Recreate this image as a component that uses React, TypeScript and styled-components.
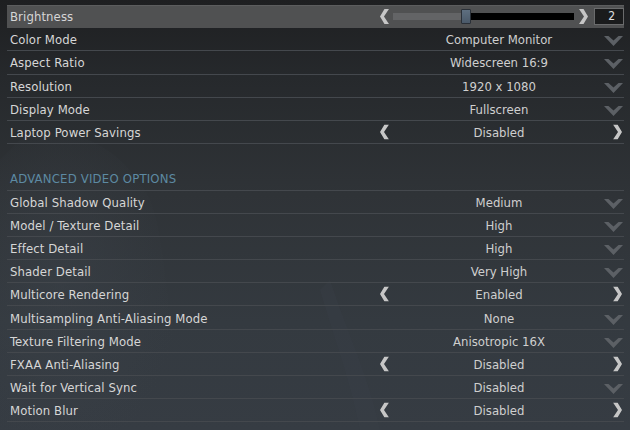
import React from "react";
import styled, { createGlobalStyle } from "styled-components";

const Global = createGlobalStyle`
  html, body { margin: 0; padding: 0; background: #1f2022; }
  body { width: 630px; height: 430px; overflow: hidden; }
`;

const Page = styled.div`
  position: relative;
  width: 630px;
  height: 430px;
  box-sizing: border-box;
  padding: 5px 6px 0 7px;
  overflow: hidden;
  font-family: "DejaVu Sans Condensed", "DejaVu Sans", sans-serif;
  font-size: 13px;
  color: #d2d2d2;
  background: linear-gradient(180deg, #1e1f21 0%, #26292c 18%, #2f3337 45%, #343a40 75%, #363c43 100%);
`;

const Backdrop = styled.svg`
  position: absolute;
  left: 0;
  top: 80px;
  width: 420px;
  height: 350px;
  pointer-events: none;
`;

const List = styled.div`
  position: relative;
  display: flex;
  flex-direction: column;
`;

const Row = styled.div<{ $active?: boolean }>`
  display: grid;
  grid-template-columns: 1fr 249px;
  align-items: center;
  height: 23.2px;
  box-sizing: border-box;
  border-bottom: 1px solid ${(p) => (p.$active ? "transparent" : "#44484d")};
  background: ${(p) => (p.$active ? "#505152" : "transparent")};
  box-shadow: ${(p) => (p.$active ? "inset 0 1px 0 #5c5d5e" : "none")};
`;

const Spacer = styled.div`
  height: 23.2px;
`;

const Label = styled.div<{ $header?: boolean }>`
  padding-left: 3px;
  padding-top: 1px;
  white-space: nowrap;
  color: ${(p) => (p.$header ? "#5d8aa3" : "#d6d6d6")};
  letter-spacing: ${(p) => (p.$header ? "0.2px" : "0.1px")};
`;

const Control = styled.div`
  position: relative;
  display: flex;
  align-items: center;
  justify-content: center;
  height: 100%;
`;

const Value = styled.span`
  color: #cfcfcf;
  white-space: nowrap;
  padding-top: 1px;
  margin-right: 1px;
`;

const ArrowBox = styled.span<{ $side: "left" | "right" }>`
  position: absolute;
  top: 50%;
  ${(p) => (p.$side === "left" ? "left: 4px;" : "right: 1px;")}
  transform: translateY(-50%);
  display: flex;
`;

const ChevronBox = styled.span`
  position: absolute;
  right: 1px;
  top: 50%;
  transform: translateY(-30%);
  display: flex;
`;

const SliderWrap = styled.div`
  display: flex;
  align-items: center;
  width: 100%;
  height: 100%;
  padding-left: 4px;
  box-sizing: border-box;
`;

const Track = styled.div`
  position: relative;
  margin-left: 4px;
  width: 182px;
  height: 7px;
  background: #000;
`;

const TrackFill = styled.div`
  position: absolute;
  left: 0;
  top: 0;
  bottom: 0;
  background: #636466;
`;

const Thumb = styled.div`
  position: absolute;
  top: -4px;
  width: 10px;
  height: 15px;
  box-sizing: border-box;
  background: linear-gradient(180deg, #5e6f80, #4a5969);
  border: 1px solid #2a3038;
  border-radius: 1px;
`;

const RightSpot = styled.span`
  margin-left: 5px;
  display: flex;
`;

const NumBox = styled.div`
  margin-left: 5px;
  width: 30px;
  height: 17px;
  box-sizing: border-box;
  background: #1a1b1c;
  border: 1px solid #6a6b6c;
  color: #e0e0e0;
  font-size: 12px;
  display: flex;
  align-items: center;
  justify-content: flex-end;
  padding-right: 8px;
`;

const Arrow = ({ dir }: { dir: "left" | "right" }) => (
  <svg width="10" height="15" viewBox="0 0 10 15">
    {dir === "left" ? (
      <polygon points="5.5,0 10,0 5,7.5 10,15 5.5,15 1,7.5" fill="#c6c6c6" />
    ) : (
      <polygon points="4.5,0 0,0 5,7.5 0,15 4.5,15 9,7.5" fill="#c6c6c6" />
    )}
  </svg>
);

const Chevron = () => (
  <svg width="19" height="10" viewBox="0 0 19 10">
    <polygon points="0,0 4.5,0 9.5,4.5 14.5,0 19,0 9.5,10" fill="#5c6065" />
  </svg>
);

type Kind = "drop" | "arrows";
type Item = { label: string; value: string; kind: Kind };

const top: Item[] = [
  { label: "Color Mode", value: "Computer Monitor", kind: "drop" },
  { label: "Aspect Ratio", value: "Widescreen 16:9", kind: "drop" },
  { label: "Resolution", value: "1920 x 1080", kind: "drop" },
  { label: "Display Mode", value: "Fullscreen", kind: "drop" },
  { label: "Laptop Power Savings", value: "Disabled", kind: "arrows" },
];

const adv: Item[] = [
  { label: "Global Shadow Quality", value: "Medium", kind: "drop" },
  { label: "Model / Texture Detail", value: "High", kind: "drop" },
  { label: "Effect Detail", value: "High", kind: "drop" },
  { label: "Shader Detail", value: "Very High", kind: "drop" },
  { label: "Multicore Rendering", value: "Enabled", kind: "arrows" },
  { label: "Multisampling Anti-Aliasing Mode", value: "None", kind: "drop" },
  { label: "Texture Filtering Mode", value: "Anisotropic 16X", kind: "drop" },
  { label: "FXAA Anti-Aliasing", value: "Disabled", kind: "arrows" },
  { label: "Wait for Vertical Sync", value: "Disabled", kind: "drop" },
  { label: "Motion Blur", value: "Disabled", kind: "arrows" },
];

const OptionRow = ({ item }: { item: Item }) => (
  <Row>
    <Label>{item.label}</Label>
    <Control>
      {item.kind === "arrows" && (
        <ArrowBox $side="left">
          <Arrow dir="left" />
        </ArrowBox>
      )}
      <Value>{item.value}</Value>
      {item.kind === "arrows" ? (
        <ArrowBox $side="right">
          <Arrow dir="right" />
        </ArrowBox>
      ) : (
        <ChevronBox>
          <Chevron />
        </ChevronBox>
      )}
    </Control>
  </Row>
);

export default function App() {
  const pct = 38;
  return (
    <>
      <Global />
      <Page>
        <Backdrop viewBox="0 0 420 350">
          <defs>
            <radialGradient id="g" cx="0.3" cy="0.5" r="0.6">
              <stop offset="0" stopColor="#3b4148" stopOpacity="0.55" />
              <stop offset="1" stopColor="#3b4148" stopOpacity="0" />
            </radialGradient>
          </defs>
          <path d="M20 60 C 60 40, 120 60, 150 120 C 170 170, 160 240, 200 350 L 0 350 L 0 80 Z" fill="url(#g)" />
          <path d="M330 200 C 350 260, 370 300, 380 350 L 360 350 C 350 300, 335 260, 320 210 Z" fill="#3a4047" opacity="0.35" />
        </Backdrop>
        <List>
          <Row $active>
            <Label>Brightness</Label>
            <Control>
              <SliderWrap>
                <Arrow dir="left" />
                <Track>
                  <TrackFill style={{ width: `${pct}%` }} />
                  <Thumb style={{ left: `calc(${pct}% - 1px)` }} />
                </Track>
                <RightSpot>
                  <Arrow dir="right" />
                </RightSpot>
                <NumBox>2</NumBox>
              </SliderWrap>
            </Control>
          </Row>
          {top.map((it) => (
            <OptionRow key={it.label} item={it} />
          ))}
          <Spacer />
          <Row>
            <Label $header>ADVANCED VIDEO OPTIONS</Label>
            <div />
          </Row>
          {adv.map((it) => (
            <OptionRow key={it.label} item={it} />
          ))}
        </List>
      </Page>
    </>
  );
}
